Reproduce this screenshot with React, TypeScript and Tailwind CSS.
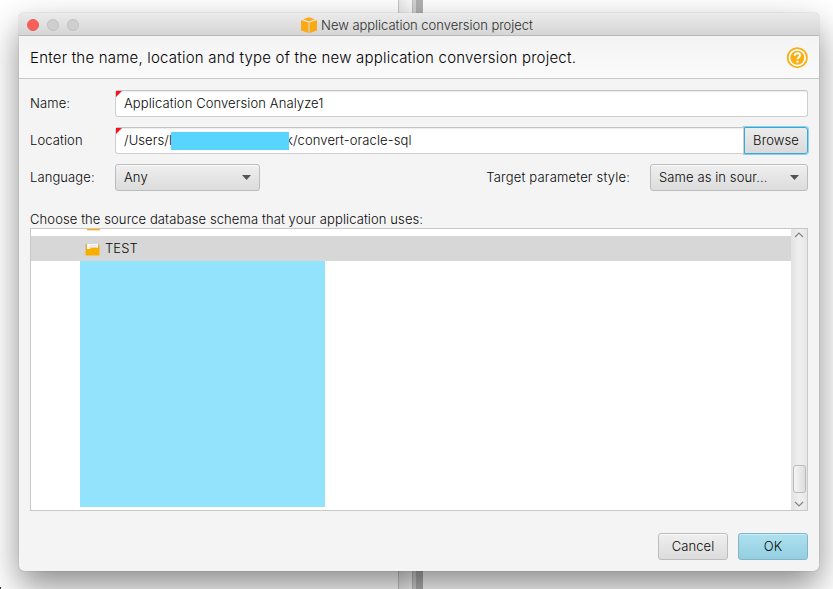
import type { ReactNode } from "react";

function TitleBar() {
  return (
    <div className="relative flex h-[23px] shrink-0 items-center justify-center border-b border-[#b9b9b9] bg-gradient-to-b from-[#ebebeb] to-[#d5d5d5] pr-1 pt-px">
      <div className="absolute left-2 top-[6px] flex gap-2">
        <span className="size-3 rounded-full border border-[#ec5b54] bg-[#f75f58]" />
        <span className="size-3 rounded-full border border-[#c1c1c1] bg-[#cfcfcf]" />
        <span className="size-3 rounded-full border border-[#c1c1c1] bg-[#cfcfcf]" />
      </div>
      <svg className="mr-1 size-4 shrink-0" viewBox="0 0 16 16" fill="#faaa17">
        <path d="M8 0.2 13.8 2.2 8 4.4 2.2 2.2Z" />
        <path d="M0 3.1 7.5 5.4V16L0 13.4Z" />
        <path d="M16 3.1 8.5 5.4V16L16 13.4Z" />
      </svg>
      <span className="whitespace-nowrap text-[13px] leading-4 tracking-[-0.03px] text-[#2e2e2e]">
        New application conversion project
      </span>
    </div>
  );
}

function HelpIcon() {
  return (
    <svg className="mt-px size-[22px]" viewBox="0 0 22 22">
      <circle cx="11.3" cy="10.7" r="9.6" fill="#fff" stroke="#f9ae12" strokeWidth="1.8" />
      <circle cx="11.3" cy="10.7" r="7" fill="#f9ae12" />
      <path d="M8.8 8.7C8.8 7.1 9.9 6.3 11.4 6.3C12.9 6.3 14 7.1 14 8.5C14 10.3 11.5 10.3 11.5 12.3" fill="none" stroke="#fff" strokeWidth="1.9" />
      <rect x="10.4" y="13.7" width="2.1" height="2" fill="#fff" />
    </svg>
  );
}

function RequiredMark() {
  return (
    <svg className="absolute left-0 top-0 size-[6px]" viewBox="0 0 6 6">
      <path d="M0 0H6L0 6Z" fill="#f5131b" />
    </svg>
  );
}

function Field({ className, children }: { className: string; children: ReactNode }) {
  return (
    <div className={`relative flex h-[27px] items-center border border-[#cfcfcf] border-t-[#c3c3c3] bg-white pl-2 shadow-[inset_0_1px_1px_#eeeeee] ${className}`}>
      <RequiredMark />
      {children}
    </div>
  );
}

function Select({ className, children }: { className: string; children: ReactNode }) {
  return (
    <div className={`flex h-[27px] items-center justify-between rounded-[3px] border border-[#bcbcbc] bg-gradient-to-b from-[#efefef] to-[#dcdcdc] pl-2 pr-2 shadow-[inset_0_1px_0_#fafafa] ${className}`}>
      <span className="pb-px">{children}</span>
      <svg className="h-[5px] w-[9px]" viewBox="0 0 9 5">
        <path d="M0 0H9L4.5 5Z" fill="#545454" />
      </svg>
    </div>
  );
}

function FolderIcon() {
  return (
    <svg className="mt-px h-[13px] w-[15px] shrink-0" viewBox="0 0 15 13">
      <path d="M0.5 1.2 2 0.5V6H0.5ZM13 1.5H14.5V6H13Z" fill="#e2a956" />
      <path d="M2 1H13V8H2Z" fill="#f8f7f4" />
      <path d="M5 2.7H11.5M5 4.5H11.5" stroke="#deded9" strokeWidth="0.8" />
      <path d="M0.5 6H4.7L6.2 4.8H14.5V11.5Q14.5 12.5 13.5 12.5H1.5Q0.5 12.5 0.5 11.5Z" fill="#f9ad00" />
    </svg>
  );
}

function Chevron({ up = false }: { up?: boolean }) {
  return (
    <svg className={`h-[6px] w-[10px] ${up ? "rotate-180" : ""}`} viewBox="0 0 10 6">
      <path d="M1 1 5 5 9 1" fill="none" stroke="#858585" strokeWidth="1.2" />
    </svg>
  );
}

function SchemaList() {
  return (
    <div className="flex h-[283px] w-[778px] border border-[#c8c8c8] bg-white">
      <div className="flex-1">
        <div className="h-[7px]">
          <div className="ml-[56px] h-px w-[13px] bg-[#ffab0f] shadow-[0_1px_0_#fde3b0]" />
        </div>
        <div className="flex h-[25px] items-center bg-[#d7d7d7] pl-[54px]">
          <FolderIcon />
          <span className="ml-[5px] pb-px">TEST</span>
        </div>
        <div className="ml-[49px] h-[246px] w-[245px] bg-[#94e3fd]" />
      </div>
      <div className="flex w-4 flex-col items-center justify-between bg-gradient-to-r from-[#e2e2e2] via-[#efefef] to-[#e6e6e6] pb-[3px] pt-[3px]">
        <Chevron up />
        <div className="flex flex-col items-center gap-2">
          <div className="h-7 w-[13px] rounded-[3px] border border-[#b9b9b9] bg-gradient-to-r from-[#f5f5f5] to-[#dddddd]" />
          <Chevron />
        </div>
      </div>
    </div>
  );
}

export default function App() {
  return (
    <div className="relative h-[589px] w-[833px] overflow-hidden bg-white pl-[19px] pt-[13px] font-['Inter','Liberation_Sans',sans-serif] font-light text-[#080808]">
      <div className="absolute inset-y-0 left-[398px] flex w-[25px] border-l border-[#c4c4c4]">
        <div className="w-[13px] bg-gradient-to-r from-[#e9e9e9] to-[#fafafa]" />
        <div className="w-[4px] border-l border-[#bdbdbd] bg-[#d2d2d2]" />
        <div className="flex-1 bg-[#b0b0b0]" />
      </div>
      <div className="absolute bottom-0 left-0 h-[2px] w-px bg-[#333]" />
      <div className="relative flex h-[558px] w-[800px] flex-col overflow-hidden rounded-[5px] bg-[#f4f4f4] shadow-[0_0_1px_rgba(0,0,0,0.45),0_15px_34px_rgba(0,0,0,0.45)]">
        <TitleBar />
        <div className="flex h-[43px] shrink-0 items-center justify-between border-b border-[#c8c8c8] bg-gradient-to-b from-[#f4f4f4] to-[#fafafa] pl-[11px] pr-[11px] text-black">
          <span className="whitespace-nowrap pt-[3px] text-[15px] tracking-[0.21px]">
            Enter the name, location and type of the new application conversion project.
          </span>
          <HelpIcon />
        </div>
        <div className="flex flex-1 flex-col pl-[11px] pr-[11px] pt-[11px] text-[13px] leading-4 tracking-[0.1px]">
          <div className="flex flex-col gap-[10px]">
            <div className="flex items-center">
              <span className="w-[85px] pb-px">Name:</span>
              <Field className="flex-1 rounded-[3px]">
                <span className="pb-px">Application Conversion Analyze1</span>
              </Field>
            </div>
            <div className="flex items-center">
              <span className="w-[85px] pb-px">Location</span>
              <Field className="w-[629px] rounded-l-[3px]">
                <span className="w-[47px] whitespace-nowrap pb-px">/Users/l</span>
                <span className="z-10 h-[18px] w-[118px] bg-[#58d5ff]" />
                <span className="-ml-[3px] pb-px">k/convert-oracle-sql</span>
              </Field>
              <div className="flex h-[27px] w-[64px] items-center justify-center rounded-r-[3px] border border-[#36a9d8] bg-gradient-to-b from-[#ececec] to-[#dadada] pb-px shadow-[0_0_0_1px_#8bd0ec]">
                Browse
              </div>
            </div>
            <div className="flex items-center">
              <span className="w-[85px] pb-px">Language:</span>
              <Select className="w-[145px]">Any</Select>
              <span className="ml-auto mr-5 pb-px tracking-[0.18px]">Target parameter style:</span>
              <Select className="w-[158px]">Same as in sour...</Select>
            </div>
          </div>
          <div className="mb-px mt-[20px]">Choose the source database schema that your application uses:</div>
          <SchemaList />
          <div className="mt-[22px] flex justify-end gap-[10px]">
            <div className="flex h-[27px] w-[70px] items-center justify-center rounded-[3px] border border-[#bcbcbc] bg-gradient-to-b from-[#efefef] to-[#dcdcdc] pb-px shadow-[inset_0_1px_0_#fafafa]">
              Cancel
            </div>
            <div className="flex h-[27px] w-[70px] items-center justify-center rounded-[3px] border border-[#83b5c5] bg-gradient-to-b from-[#aee1ef] to-[#93cee0] pb-px shadow-[inset_0_1px_0_#c6edf7]">
              OK
            </div>
          </div>
        </div>
      </div>
    </div>
  );
}
